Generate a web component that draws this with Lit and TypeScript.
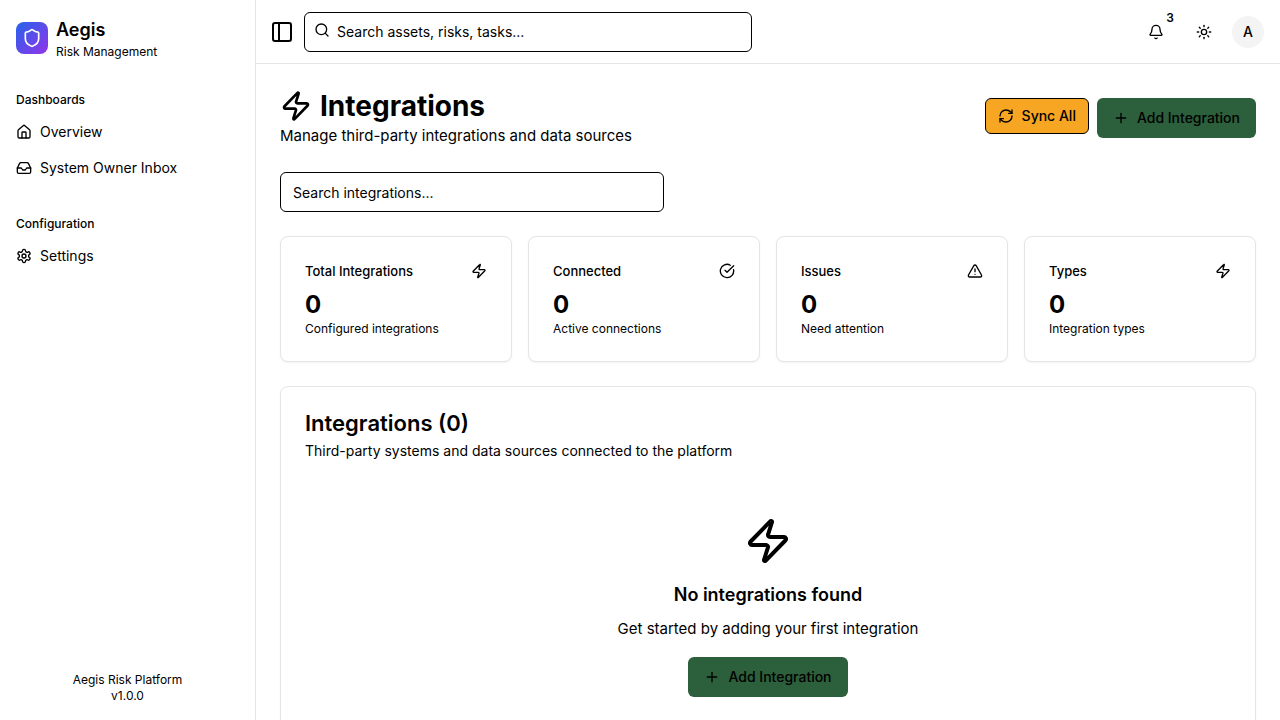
import { LitElement, html, css, svg, type SVGTemplateResult } from "lit";
import { customElement, property } from "lit/decorators.js";

const ICONS: Record<string, SVGTemplateResult> = {
  shield: svg`<path d="M20 13c0 5-3.5 7.5-7.66 8.95a1 1 0 0 1-.67-.01C7.5 20.5 4 18 4 13V6a1 1 0 0 1 1-1c2 0 4.5-1.2 6.24-2.72a1.17 1.17 0 0 1 1.52 0C14.51 3.81 17 5 19 5a1 1 0 0 1 1 1z"/>`,
  house: svg`<path d="M15 21v-8a1 1 0 0 0-1-1h-4a1 1 0 0 0-1 1v8"/><path d="M3 10a2 2 0 0 1 .709-1.528l7-5.999a2 2 0 0 1 2.582 0l7 5.999A2 2 0 0 1 21 10v9a2 2 0 0 1-2 2H5a2 2 0 0 1-2-2z"/>`,
  inbox: svg`<polyline points="22 12 16 12 14 15 10 15 8 12 2 12"/><path d="M5.45 5.11 2 12v6a2 2 0 0 0 2 2h16a2 2 0 0 0 2-2v-6l-3.45-6.89A2 2 0 0 0 16.76 4H7.24a2 2 0 0 0-1.79 1.11z"/>`,
  settings: svg`<path d="M12.22 2h-.44a2 2 0 0 0-2 2v.18a2 2 0 0 1-1 1.73l-.43.25a2 2 0 0 1-2 0l-.15-.08a2 2 0 0 0-2.73.73l-.22.38a2 2 0 0 0 .73 2.73l.15.1a2 2 0 0 1 1 1.72v.51a2 2 0 0 1-1 1.74l-.15.09a2 2 0 0 0-.73 2.73l.22.38a2 2 0 0 0 2.73.73l.15-.08a2 2 0 0 1 2 0l.43.25a2 2 0 0 1 1 1.73V20a2 2 0 0 0 2 2h.44a2 2 0 0 0 2-2v-.18a2 2 0 0 1 1-1.73l.43-.25a2 2 0 0 1 2 0l.15.08a2 2 0 0 0 2.73-.73l.22-.39a2 2 0 0 0-.73-2.73l-.15-.08a2 2 0 0 1-1-1.74v-.5a2 2 0 0 1 1-1.74l.15-.09a2 2 0 0 0 .73-2.73l-.22-.38a2 2 0 0 0-2.73-.73l-.15.08a2 2 0 0 1-2 0l-.43-.25a2 2 0 0 1-1-1.73V4a2 2 0 0 0-2-2z"/><circle cx="12" cy="12" r="3"/>`,
  panel: svg`<rect width="18" height="18" x="3" y="3" rx="2"/><path d="M9 3v18"/>`,
  search: svg`<circle cx="11" cy="11" r="8"/><path d="m21 21-4.3-4.3"/>`,
  bell: svg`<path d="M10.268 21a2 2 0 0 0 3.464 0"/><path d="M3.262 15.326A1 1 0 0 0 4 17h16a1 1 0 0 0 .74-1.673C19.41 13.956 18 12.499 18 8A6 6 0 0 0 6 8c0 4.499-1.411 5.956-2.738 7.326"/>`,
  sun: svg`<circle cx="12" cy="12" r="4"/><path d="M12 2v2"/><path d="M12 20v2"/><path d="m4.93 4.93 1.41 1.41"/><path d="m17.66 17.66 1.41 1.41"/><path d="M2 12h2"/><path d="M20 12h2"/><path d="m6.34 17.66-1.41 1.41"/><path d="m19.07 4.93-1.41 1.41"/>`,
  zap: svg`<path d="M4 14a1 1 0 0 1-.78-1.63l9.9-10.2a.5.5 0 0 1 .86.46l-1.92 6.02A1 1 0 0 0 13 10h7a1 1 0 0 1 .78 1.63l-9.9 10.2a.5.5 0 0 1-.86-.46l1.92-6.02A1 1 0 0 0 11 14z"/>`,
  refresh: svg`<path d="M3 12a9 9 0 0 1 9-9 9.75 9.75 0 0 1 6.74 2.74L21 8"/><path d="M21 3v5h-5"/><path d="M21 12a9 9 0 0 1-9 9 9.75 9.75 0 0 1-6.74-2.74L3 16"/><path d="M8 16H3v5"/>`,
  plus: svg`<path d="M5 12h14"/><path d="M12 5v14"/>`,
  check: svg`<path d="M21.801 10A10 10 0 1 1 17 3.335"/><path d="m9 11 3 3L22 4"/>`,
  alert: svg`<path d="m21.73 18-8-14a2 2 0 0 0-3.48 0l-8 14A2 2 0 0 0 4 21h16a2 2 0 0 0 1.73-3"/><path d="M12 9v4"/><path d="M12 17h.01"/>`,
};

const icon = (name: string, size = 16) => html`<svg
  width=${size} height=${size} viewBox="0 0 24 24" fill="none" stroke="currentColor"
  stroke-width="2" stroke-linecap="round" stroke-linejoin="round" aria-hidden="true"
>${ICONS[name]}</svg>`;

const base = css`
  *, *::before, *::after { box-sizing: border-box; }
  h1, h2, h3, p, ul { margin: 0; padding: 0; }
  ul { list-style: none; }
  svg { display: block; flex: none; }
  a { color: inherit; text-decoration: none; }
  button, input { font: inherit; color: inherit; margin: 0; }
  button { border: 0; padding: 0; background: none; cursor: pointer; }
  input {
    display: block;
    width: 100%;
    height: 40px;
    padding: 8px 12px;
    border: 1px solid #000;
    border-radius: 6px;
    background: #fff;
    font-size: 14px;
    line-height: 20px;
  }
  input::placeholder { color: #000; opacity: 1; }
`;

const NAV = [
  { label: "Dashboards", items: [{ icon: "house", text: "Overview" }, { icon: "inbox", text: "System Owner Inbox" }] },
  { label: "Configuration", items: [{ icon: "settings", text: "Settings" }] },
];

const STATS = [
  { title: "Total Integrations", icon: "zap", value: 0, note: "Configured integrations" },
  { title: "Connected", icon: "check", value: 0, note: "Active connections" },
  { title: "Issues", icon: "alert", value: 0, note: "Need attention" },
  { title: "Types", icon: "zap", value: 0, note: "Integration types" },
];

@customElement("app-sidebar")
export class AppSidebar extends LitElement {
  static styles = [base, css`
    :host {
      display: flex;
      flex-direction: column;
      position: sticky;
      top: 0;
      height: 100vh;
      border-right: 1px solid #e5e5e5;
      background: #fff;
    }
    .brand { display: flex; align-items: center; gap: 8px; padding: 16px; }
    .logo {
      display: grid;
      place-items: center;
      width: 32px;
      height: 32px;
      border-radius: 8px;
      color: #fff;
      background: linear-gradient(to bottom right, #2563eb, #9333ea);
    }
    .name { font-size: 18px; line-height: 28px; font-weight: 600; }
    .tagline { font-size: 12px; line-height: 16px; }
    nav { flex: 1; display: flex; flex-direction: column; gap: 24px; padding: 8px 16px; overflow: auto; }
    .label { font-size: 12px; line-height: 32px; font-weight: 500; }
    .items { display: flex; flex-direction: column; gap: 4px; }
    .item { display: flex; align-items: center; gap: 8px; height: 32px; font-size: 14px; line-height: 20px; }
    footer { padding: 16px; text-align: center; font-size: 12px; line-height: 16px; }
  `];

  render() {
    return html`
      <div class="brand">
        <div class="logo">${icon("shield", 20)}</div>
        <div>
          <div class="name">Aegis</div>
          <div class="tagline">Risk Management</div>
        </div>
      </div>
      <nav>
        ${NAV.map((group) => html`
          <section>
            <h2 class="label">${group.label}</h2>
            <ul class="items">
              ${group.items.map((item) => html`
                <li><a class="item" href="#">${icon(item.icon)}<span>${item.text}</span></a></li>`)}
            </ul>
          </section>`)}
      </nav>
      <footer>
        <p>Aegis Risk Platform</p>
        <p>v1.0.0</p>
      </footer>`;
  }
}

@customElement("app-topbar")
export class AppTopbar extends LitElement {
  static styles = [base, css`
    :host {
      display: flex;
      align-items: center;
      justify-content: space-between;
      gap: 16px;
      height: 64px;
      padding: 0 16px 0 14px;
      border-bottom: 1px solid #e5e5e5;
      background: #fff;
    }
    .left { flex: 1; display: flex; align-items: center; gap: 10px; }
    .search { position: relative; flex: 1; max-width: 448px; }
    .search svg { position: absolute; left: 10px; top: 10px; }
    .search input { padding-left: 32px; }
    .right { display: flex; align-items: center; gap: 8px; }
    .action { position: relative; display: grid; place-items: center; width: 40px; height: 40px; }
    .badge {
      position: absolute;
      top: -4px;
      right: -4px;
      width: 20px;
      font-size: 12px;
      line-height: 20px;
      font-weight: 600;
      text-align: center;
    }
    .avatar {
      width: 32px;
      height: 32px;
      border-radius: 50%;
      background: #f4f4f4;
      font-size: 14px;
      line-height: 32px;
      font-weight: 500;
      text-align: center;
    }
  `];

  render() {
    return html`
      <div class="left">
        <button aria-label="Toggle sidebar">${icon("panel", 24)}</button>
        <div class="search">
          <input type="search" aria-label="Search assets, risks, tasks" placeholder="Search assets, risks, tasks..." />
          ${icon("search")}
        </div>
      </div>
      <div class="right">
        <button class="action" aria-label="Notifications">${icon("bell")}<span class="badge">3</span></button>
        <button class="action" aria-label="Toggle theme">${icon("sun")}</button>
        <button class="avatar" aria-label="Account">A</button>
      </div>`;
  }
}

@customElement("stat-card")
export class StatCard extends LitElement {
  @property() heading = "";
  @property() icon = "zap";
  @property() note = "";
  @property({ type: Number }) value = 0;

  static styles = [base, css`
    :host {
      display: block;
      padding: 24px;
      border: 1px solid #e5e5e5;
      border-radius: 8px;
      background: #fff;
      box-shadow: 0 1px 2px rgba(0, 0, 0, 0.05);
    }
    .head { display: flex; align-items: center; justify-content: space-between; padding-bottom: 8px; }
    .title { font-size: 13px; line-height: 20px; font-weight: 500; }
    .value { font-size: 24px; line-height: 32px; font-weight: 700; }
    .note { font-size: 12px; line-height: 16px; }
  `];

  render() {
    return html`
      <div class="head"><h3 class="title">${this.heading}</h3>${icon(this.icon)}</div>
      <div class="value">${this.value}</div>
      <p class="note">${this.note}</p>`;
  }
}

@customElement("app-root")
export class AppRoot extends LitElement {
  static styles = [base, css`
    :host {
      display: grid;
      grid-template-columns: 256px minmax(0, 1fr);
      align-items: start;
      min-height: 100vh;
      background: #fff;
      color: #000;
      font-family: Inter, "Liberation Sans", sans-serif;
      font-size: 15px;
      line-height: 24px;
    }
    main { display: flex; flex-direction: column; gap: 24px; padding: 24px; }
    .head { display: flex; align-items: center; justify-content: space-between; gap: 16px; }
    .title { display: flex; align-items: center; gap: 8px; font-size: 28px; line-height: 36px; font-weight: 700; }
    .actions { display: flex; align-items: flex-start; gap: 8px; }
    .button {
      display: inline-flex;
      align-items: center;
      justify-content: center;
      gap: 8px;
      height: 40px;
      padding: 0 16px;
      border-radius: 6px;
      background: #2c5f3b;
      font-size: 14px;
      line-height: 20px;
      font-weight: 500;
      white-space: nowrap;
    }
    .sync { height: 36px; padding: 0 12px; border: 1px solid #000; background: #f6a623; }
    .filter { width: 100%; max-width: 384px; }
    .stats { display: grid; grid-template-columns: repeat(4, minmax(0, 1fr)); gap: 16px; }
    .panel {
      padding: 24px;
      border: 1px solid #e5e5e5;
      border-radius: 8px;
      box-shadow: 0 1px 2px rgba(0, 0, 0, 0.05);
    }
    .panel-head { display: flex; flex-direction: column; gap: 6px; padding-bottom: 24px; }
    .panel-title { font-size: 22px; line-height: 24px; font-weight: 600; }
    .panel-note { font-size: 14px; line-height: 20px; }
    .empty { display: flex; flex-direction: column; align-items: center; gap: 16px; padding: 32px 0; }
    .empty-text { display: flex; flex-direction: column; gap: 8px; text-align: center; }
    .empty-title { font-size: 18px; line-height: 28px; font-weight: 600; }
  `];

  render() {
    const add = html`<button class="button">${icon("plus")}Add Integration</button>`;
    return html`
      <app-sidebar></app-sidebar>
      <div>
        <app-topbar></app-topbar>
        <main>
          <div class="head">
            <div>
              <h1 class="title">${icon("zap", 32)}Integrations</h1>
              <p>Manage third-party integrations and data sources</p>
            </div>
            <div class="actions">
              <button class="button sync">${icon("refresh")}Sync All</button>
              ${add}
            </div>
          </div>
          <input class="filter" type="search" aria-label="Search integrations" placeholder="Search integrations..." />
          <div class="stats">
            ${STATS.map((s) => html`
              <stat-card heading=${s.title} icon=${s.icon} .value=${s.value} note=${s.note}></stat-card>`)}
          </div>
          <section class="panel">
            <div class="panel-head">
              <h2 class="panel-title">Integrations (0)</h2>
              <p class="panel-note">Third-party systems and data sources connected to the platform</p>
            </div>
            <div class="empty">
              ${icon("zap", 48)}
              <div class="empty-text">
                <h3 class="empty-title">No integrations found</h3>
                <p>Get started by adding your first integration</p>
              </div>
              ${add}
            </div>
          </section>
        </main>
      </div>`;
  }
}
